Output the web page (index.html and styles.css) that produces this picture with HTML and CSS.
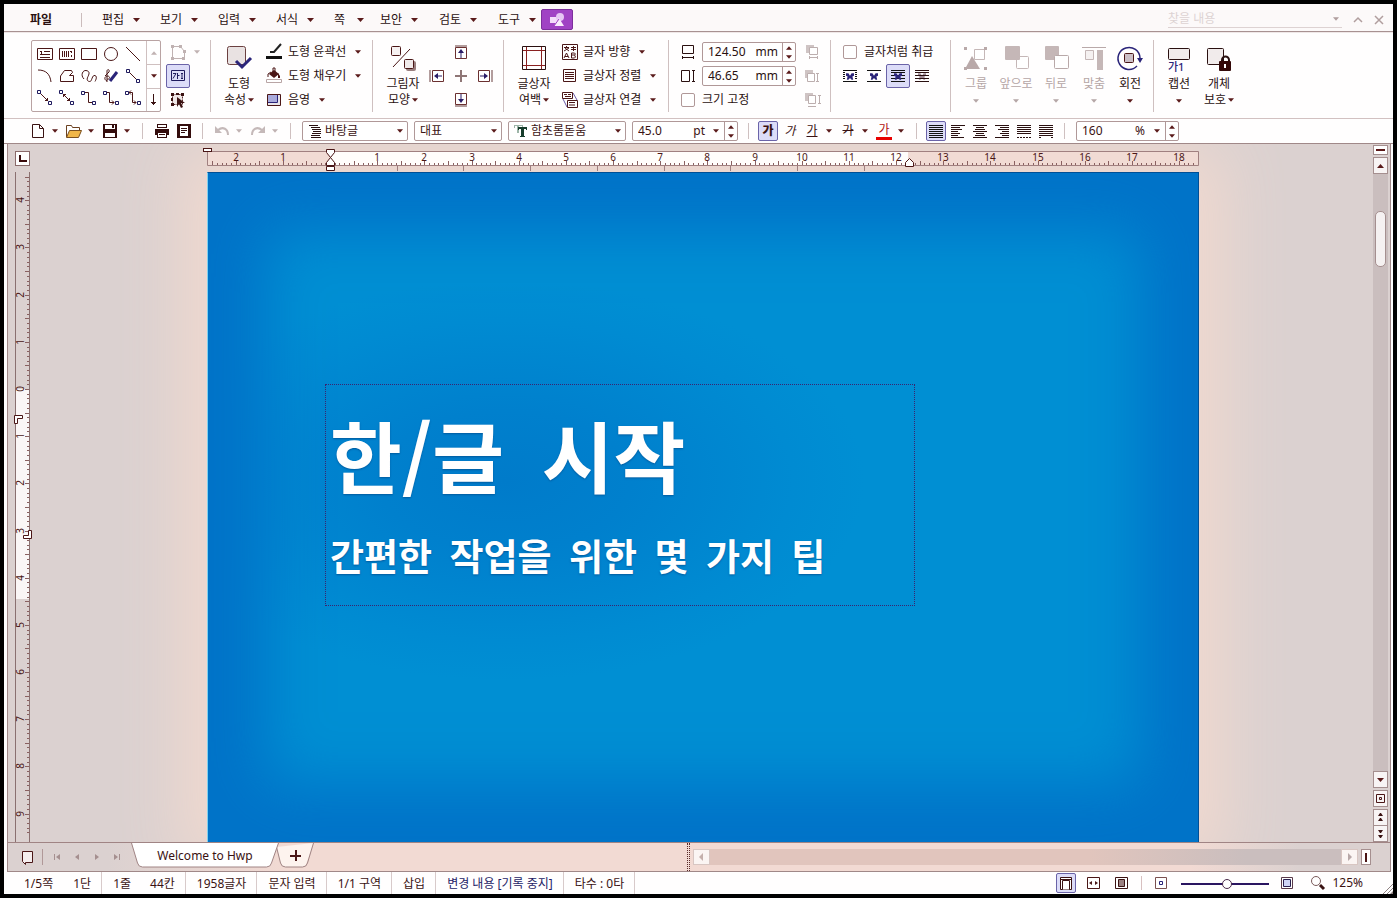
FILE: index.html
```html
<!DOCTYPE html>
<html lang="ko">
<head>
<meta charset="utf-8">
<title>Welcome to Hwp</title>
<link rel="stylesheet" href="styles.css">
</head>
<body>
<svg class="sprite" aria-hidden="true">
  <symbol id="caret" viewBox="0 0 7 4"><path d="M0 0h7L3.500 4z" fill="currentColor"/></symbol>
  <symbol id="up" viewBox="0 0 7 4"><path d="M0 4h7L3.500 0z" fill="currentColor"/></symbol>
  <symbol id="wing" viewBox="0 0 10 8"><path d="M0 0h3l2 3 2-3h3v3L8 4l1 4H7L5 6 3 8H1l1-4-2-1z" fill="currentColor"/></symbol>
  <symbol id="node" viewBox="0 0 4 4"><path d="M.5.5h3v3h-3z" fill="#fff" stroke="#1f1a5e"/></symbol>
</svg>
<div class="app">
  <header class="menubar">
    <nav class="menus">
      <button class="menu file">파일</button>
      <span class="menu-sep"></span>
      <button class="menu">편집<svg class="caret"><use href="#caret"/></svg></button>
      <button class="menu">보기<svg class="caret"><use href="#caret"/></svg></button>
      <button class="menu">입력<svg class="caret"><use href="#caret"/></svg></button>
      <button class="menu">서식<svg class="caret"><use href="#caret"/></svg></button>
      <button class="menu">쪽<svg class="caret"><use href="#caret"/></svg></button>
      <button class="menu">보안<svg class="caret"><use href="#caret"/></svg></button>
      <button class="menu">검토<svg class="caret"><use href="#caret"/></svg></button>
      <button class="menu">도구<svg class="caret"><use href="#caret"/></svg></button>
      <button class="shape-tab" aria-label="도형"><svg width="16" height="14" viewBox="0 0 16 14"><path d="M1 4h7v6H1z" fill="#f3dcfa"/><circle cx="11" cy="4" r="4" fill="#e6c6f4"/><path d="M10 5l5 8H5z" fill="#f9ecfd"/><path d="M5 13l5-7" stroke="#a043c4"/></svg></button>
    </nav>
    <div class="find">
      <label class="find-box"><input type="text" placeholder="찾을 내용" aria-label="찾을 내용"><svg class="small"><use href="#caret"/></svg></label>
      <button aria-label="접기"><svg width="10" height="10" viewBox="0 0 10 10" fill="none" stroke="currentColor" stroke-width="1.500"><path d="M1 7l4-4 4 4"/></svg></button>
      <button aria-label="닫기"><svg width="10" height="10" viewBox="0 0 10 10" fill="none" stroke="currentColor" stroke-width="1.500"><path d="M1 1l8 8M9 1L1 9"/></svg></button>
    </div>
  </header>

  <section class="ribbon">
    <div class="group g-draw">
      <div class="gallery">
        <div class="shapes">
          <button aria-label="가로 글상자"><svg width="16" height="16" viewBox="0 0 16 16" fill="none" stroke="#4a1616"><path d="M.5 2.500h15v11H.5zM3 5.500h1M7 5.500h6M3 8.500h10M3 11.500h10M4.500 5v3"/></svg></button>
          <button aria-label="세로 글상자"><svg width="16" height="16" viewBox="0 0 16 16" fill="none" stroke="#4a1616"><path d="M.5 2.500h15v11H.5zM3.500 5v6M5.500 5v6M7.500 5v6M9.500 5v6M12.500 5v2M12.500 9v2M11 5.500h2"/></svg></button>
          <button aria-label="직사각형"><svg width="16" height="16" viewBox="0 0 16 16" fill="none" stroke="#4a1616"><path d="M.5 2.500h15v11H.5z"/></svg></button>
          <button aria-label="타원"><svg width="16" height="16" viewBox="0 0 16 16" fill="none" stroke="#4a1616"><circle cx="8" cy="8" r="6.500"/></svg></button>
          <button aria-label="직선"><svg width="16" height="16" viewBox="0 0 16 16" fill="none" stroke="#4a1616"><path d="M1 1l14 14"/></svg></button>
          <button aria-label="호"><svg width="16" height="16" viewBox="0 0 16 16" fill="none" stroke="#4a1616"><path d="M1 2c8 0 12 4 13 12"/></svg></button>
          <button aria-label="다각형"><svg width="16" height="16" viewBox="0 0 16 16" fill="none" stroke="#4a1616"><path d="M1.500 13.500V8l4-5.500h7l1 2-3 3h4v6z"/></svg></button>
          <button aria-label="곡선"><svg width="16" height="16" viewBox="0 0 16 16" fill="none" stroke="#4a1616"><path d="M3 11C-1 7 2 2 5 2.500s4 2 2 6 0 5 2 5 2-7 5-6 0 6 0 6"/></svg></button>
          <button aria-label="자유선"><svg width="16" height="16" viewBox="0 0 16 16" fill="none" stroke="#4a1616"><path d="M4 13c-3-1-3-5 1-5 3 1 1 4-1 3M4 14V3c0-2 3-2 2 1L2 8"/><path d="M7 13l7-9" stroke="#2a2479" stroke-width="3"/></svg></button>
          <button aria-label="직선 연결선"><svg width="16" height="16" viewBox="0 0 16 16" fill="none" stroke="#4a1616"><path d="M3 3l10 10"/><use href="#node" x="1" y="1" width="4" height="4"/><use href="#node" x="11" y="11" width="4" height="4"/></svg></button>
          <button aria-label="화살표 연결선"><svg width="16" height="16" viewBox="0 0 16 16" fill="none" stroke="#4a1616"><path d="M3 3l8 8M10.500 8v2.500H8"/><use href="#node" x="0" y="0" width="4" height="4"/><use href="#node" x="11" y="11" width="4" height="4"/></svg></button>
          <button aria-label="양쪽 화살표 연결선"><svg width="16" height="16" viewBox="0 0 16 16" fill="none" stroke="#4a1616"><path d="M4 4l7 7M10.500 8v2.500H8M4.500 7V4.500H7"/><use href="#node" x="0" y="0" width="4" height="4"/><use href="#node" x="11" y="11" width="4" height="4"/></svg></button>
          <button aria-label="꺾인 연결선"><svg width="16" height="16" viewBox="0 0 16 16" fill="none" stroke="#4a1616"><path d="M3 2.500h4.500v10H12"/><use href="#node" x="0" y="1" width="4" height="4"/><use href="#node" x="11" y="11" width="4" height="4"/></svg></button>
          <button aria-label="꺾인 화살표 연결선"><svg width="16" height="16" viewBox="0 0 16 16" fill="none" stroke="#4a1616"><path d="M3 2.500h3.500v10H11M9 10.500l2 2-2 2"/><use href="#node" x="0" y="1" width="4" height="4"/><use href="#node" x="12" y="11" width="4" height="4"/></svg></button>
          <button aria-label="꺾인 양쪽 화살표 연결선"><svg width="16" height="16" viewBox="0 0 16 16" fill="none" stroke="#4a1616"><path d="M4 2.500h3.500v10H11M9 10.500l2 2-2 2M6 .500l-2 2 2 2"/><use href="#node" x="0" y="1" width="4" height="4"/><use href="#node" x="12" y="11" width="4" height="4"/></svg></button>
        </div>
        <div class="gallery-scroll">
          <button class="dim" aria-label="위로"><svg class="small"><use href="#up"/></svg></button>
          <button aria-label="아래로"><svg class="small"><use href="#caret"/></svg></button>
          <button aria-label="더 보기"><svg width="7" height="12" viewBox="0 0 7 12"><path d="M3 0h1v8h2v1H5v1H4v1H3v-1H2V9H1V8h2z" fill="#3a1212"/></svg></button>
        </div>
      </div>
      <div class="tools">
        <div class="tool-row dim"><button class="tool" disabled aria-label="다각형 편집"><svg width="16" height="16" viewBox="0 0 16 16" fill="none" stroke="#c0b2b2"><path d="M2.500 2.500h8l4 5v7h-12z"/><path d="M1 1h3v3H1zM9 1h3v3H9zM13 6h3v3h-3zM1 13h3v3H1zM12 13h3v3h-3z" fill="#c0b2b2" stroke="none"/></svg></button><svg class="small"><use href="#caret"/></svg></div>
        <button class="tool on" aria-label="글상자"><svg width="16" height="14" viewBox="0 0 16 14" fill="none" stroke="#1f1a5e"><path d="M1.500 1.500h13v10h-13zM3 4.500h3l-3 5M7.500 4v6M7.500 6.500h2M11 4.500h2M12 4.500v5M11 9.500h2"/></svg></button>
        <button class="tool" aria-label="개체 선택"><svg width="16" height="16" viewBox="0 0 16 16"><path d="M2.500 2.500h10v10h-10z" fill="#eee6e6" stroke="#5a2a2a" stroke-dasharray="2 1"/><path d="M1 1h3v3H1zM6 1h3v2H6zM11 1h3v3h-3zM1 6h2v3H1zM1 11h3v3H1z" fill="#3a1212"/><path d="M7 5l8 6h-4l2 4-2 1-2-4-2 3z" fill="#3a1212"/></svg></button>
      </div>
    </div>

    <div class="group g-shape">
      <button class="tall"><span class="pic"><svg width="28" height="28" viewBox="0 0 28 28"><rect x="2.500" y="2.500" width="18" height="18" rx="2" fill="#e9e2e2" stroke="#6b4040"/><path d="M11 17l6 6 9-9" fill="none" stroke="#2a2479" stroke-width="3"/></svg></span><span>도형</span><span class="line">속성<svg class="tiny"><use href="#caret"/></svg></span></button>
      <div class="stack">
        <button class="row"><svg width="18" height="16" viewBox="0 0 18 16"><path d="M1 12h16v3H1z" fill="#111"/><path d="M5 8h4l7-8" fill="none" stroke="#222" stroke-width="2"/></svg>도형 윤곽선<svg class="small"><use href="#caret"/></svg></button>
        <button class="row"><svg width="18" height="16" viewBox="0 0 18 16"><path d="M1.500 11.500h15v3h-15z" fill="#fff" stroke="#b9a5a5"/><path d="M4 6l5-4 5 4-5 4z" fill="#4a1616"/><path d="M8 4V0h2v5M3 9V6l3-2" fill="none" stroke="#4a1616"/><path d="M13 5l2 3v2h-2z" fill="#4a1616"/></svg>도형 채우기<svg class="small"><use href="#caret"/></svg></button>
        <button class="row"><svg width="18" height="16" viewBox="0 0 18 16"><path d="M2.500 2.500h13v11h-13z" fill="#e9e6ea" stroke="#4a1616"/><path d="M3 3h9v7H3z" fill="#a9abdc"/><path d="M3 10.500h9.500V3" fill="none" stroke="#2a2479"/></svg>음영<svg class="small"><use href="#caret"/></svg></button>
      </div>
    </div>

    <div class="group g-shadow">
      <button class="tall"><span class="pic"><svg width="28" height="28" viewBox="0 0 28 28" fill="none" stroke="#4a1616"><rect x="2.500" y="2.500" width="9" height="9" rx="1" fill="#f6f1f1"/><path d="M21 5L4 23"/><rect x="17" y="17" width="10" height="10" rx="2" fill="#9a8080" stroke="none"/><rect x="15.500" y="15.500" width="9" height="9" rx="1" fill="#f0eaea"/></svg></span><span>그림자</span><span class="line">모양<svg class="tiny"><use href="#caret"/></svg></span></button>
      <div class="nudge">
        <button class="n-up" aria-label="위로"><svg width="16" height="16" viewBox="0 0 16 16"><path d="M2 1h12v2H2z" fill="#b39d9d"/><path d="M2.500 3.500h11v11h-11z" fill="#fff" stroke="#6b3030"/><path d="M8 5l3 4H8.500v5h-1V9H5z" fill="#2a1c66"/></svg></button>
        <button class="n-left" aria-label="왼쪽으로"><svg width="16" height="16" viewBox="0 0 16 16"><path d="M0 2h2v12H0z" fill="#b39d9d"/><path d="M3.500 2.500h11v11h-11z" fill="#fff" stroke="#6b3030"/><path d="M5 8l4-3v2.500h4v1H9V11z" fill="#2a1c66"/></svg></button>
        <button class="n-mid" aria-label="제자리"><svg width="16" height="16" viewBox="0 0 16 16"><path d="M7 2h2v5h5v2H9v5H7V9H2V7h5z" fill="#8f7676"/></svg></button>
        <button class="n-right" aria-label="오른쪽으로"><svg width="16" height="16" viewBox="0 0 16 16"><path d="M14 2h2v12h-2z" fill="#b39d9d"/><path d="M1.500 2.500h11v11h-11z" fill="#fff" stroke="#6b3030"/><path d="M11 8L7 5v2.500H3v1h4V11z" fill="#2a1c66"/></svg></button>
        <button class="n-down" aria-label="아래로"><svg width="16" height="16" viewBox="0 0 16 16"><path d="M2 13h12v2H2z" fill="#b39d9d"/><path d="M2.500 1.500h11v11h-11z" fill="#fff" stroke="#6b3030"/><path d="M8 11l3-4H8.500V2h-1v5H5z" fill="#2a1c66"/></svg></button>
      </div>
    </div>

    <div class="group g-textbox">
      <button class="tall"><span class="pic"><svg width="28" height="28" viewBox="0 0 28 28" fill="none"><path d="M2.500 2.500h23v23h-23z" stroke="#2a1010"/><path d="M6.500 3v22M21.500 3v22M3 6.500h22M3 21.500h22" stroke="#8a2020"/></svg></span><span>글상자</span><span class="line">여백<svg class="tiny"><use href="#caret"/></svg></span></button>
      <div class="stack">
        <button class="row"><svg width="16" height="16" viewBox="0 0 16 16" fill="none" stroke="#4a1616"><path d="M.5.500h15v15H.5zM2 3.500h5M4.500 2v2M2 7l5-3M3 4l4 3M9 3.500h5M11.500 2v5M9 5.500h5M2 14l2.500-5L7 14M3 12.500h3M9.500 9v5h3l1-1-1-2h-3M9.500 9h3l1 1-1 1"/></svg>글자 방향<svg class="small"><use href="#caret"/></svg></button>
        <button class="row"><svg width="16" height="16" viewBox="0 0 16 16" fill="none" stroke="#4a1616"><path d="M1.500 1.500h12v12h-12zM3 4.500h9M3 6.500h9M3 8.500h9M3 10.500h9"/></svg>글상자 정렬<svg class="small"><use href="#caret"/></svg></button>
        <button class="row"><svg width="16" height="16" viewBox="0 0 16 16" fill="none" stroke="#4a1616"><path d="M1 7l4 8M11 1l4 7" stroke="#6a5aa8"/><path d="M.5.500h10v6H.5zM2 2.500h3M6 2.500h3M3 4.500h6"/><path d="M5.500 8.500h10v7h-10zM7 10.500h6M7 13h6" fill="#fff"/></svg>글상자 연결<svg class="small"><use href="#caret"/></svg></button>
      </div>
    </div>

    <div class="group g-size">
      <div class="stack">
        <div class="size-row"><svg width="14" height="16" viewBox="0 0 14 16" fill="none" stroke="#2a1010"><path d="M1.500 1.500h11v8h-11zM1 13.500h12M1.500 12v3M12.500 12v3"/></svg>
          <div class="number"><input type="text" value="124.50" aria-label="너비"><span class="unit">mm</span><span class="spin"><button aria-label="늘리기"><svg class="small"><use href="#up"/></svg></button><button aria-label="줄이기"><svg class="small"><use href="#caret"/></svg></button></span></div>
          <button class="link" disabled aria-label="너비를 같게"><svg width="14" height="16" viewBox="0 0 14 16"><path d="M1 1h8v8H1z" fill="#cfc4c4"/><path d="M4.500 3.500h8v7h-8z" fill="#fff" stroke="#bcaeae"/><path d="M4 13.500h9M4.500 12v3M12.500 12v3" stroke="#bcaeae"/></svg></button></div>
        <div class="size-row"><svg width="14" height="16" viewBox="0 0 14 16" fill="none" stroke="#2a1010"><path d="M.5 2.500h8v11h-8zM12.500 2v12M11 2.500h3M11 13.500h3"/></svg>
          <div class="number"><input type="text" value="46.65" aria-label="높이"><span class="unit">mm</span><span class="spin"><button aria-label="늘리기"><svg class="small"><use href="#up"/></svg></button><button aria-label="줄이기"><svg class="small"><use href="#caret"/></svg></button></span></div>
          <button class="link" disabled aria-label="높이를 같게"><svg width="14" height="16" viewBox="0 0 14 16"><path d="M0 2h8v8H0z" fill="#cfc4c4"/><path d="M2.500 5.500h7v8h-7z" fill="#fff" stroke="#bcaeae"/><path d="M12.500 5v9M11 5.500h3M11 13.500h3" stroke="#bcaeae"/></svg></button></div>
        <div class="size-row"><label class="check fixed"><input type="checkbox">크기 고정</label>
          <button class="link" disabled aria-label="크기를 같게"><svg width="16" height="16" viewBox="0 0 16 16"><path d="M0 1h8v8H0z" fill="#cfc4c4"/><path d="M3.500 3.500h7v8h-7z" fill="#fff" stroke="#bcaeae"/><path d="M3 14.500h8M14.500 3v9M13 3.500h3M13 11.500h3" stroke="#bcaeae"/></svg></button></div>
      </div>
    </div>

    <div class="group g-wrap">
      <div class="stack">
        <label class="check inset"><input type="checkbox">글자처럼 취급</label>
        <div class="wraps">
          <button class="tool" aria-label="어울림"><svg width="14" height="14" viewBox="0 0 14 14"><path d="M0 1.500h14M0 3.500h2M12 3.500h2M0 5.500h2M12 5.500h2M0 7.500h2M12 7.500h2M0 9.500h2M12 9.500h2M0 12.500h14" stroke="#111"/><use href="#wing" x="3" y="4" width="8" height="7" color="#2a2479"/></svg></button>
          <button class="tool" aria-label="자리 차지"><svg width="14" height="14" viewBox="0 0 14 14"><path d="M0 1.500h14M0 12.500h14" stroke="#111"/><use href="#wing" x="3" y="4" width="8" height="7" color="#2a2479"/></svg></button>
          <button class="tool on" aria-label="글 앞으로"><svg width="14" height="14" viewBox="0 0 14 14"><path d="M0 1.500h14M0 3.500h14M0 6.500h14M0 9.500h14M0 12.500h14" stroke="#111"/><use href="#wing" x="3" y="4" width="8" height="7" color="#2a2479"/></svg></button>
          <button class="tool" aria-label="글 뒤로"><svg width="14" height="14" viewBox="0 0 14 14"><use href="#wing" x="3" y="4" width="8" height="7" color="#a08c98"/><path d="M0 1.500h14M0 3.500h14M0 6.500h14M0 9.500h14M0 12.500h14" stroke="#2a1010"/></svg></button>
        </div>
      </div>
    </div>

    <div class="group g-arrange">
      <button class="tall" disabled><span class="pic"><svg width="28" height="28" viewBox="0 0 28 28"><path d="M12.500 5.500h10v10h-10z" fill="#fff" stroke="#c5b7b7"/><path d="M10 12l8 13H3z" fill="#b9a9a9"/><path d="M2 3h3v3H2zM22 3h3v3h-3zM22 23h3v3h-3zM2 23h3v3H2z" fill="#b9a9a9"/></svg></span><span>그룹</span><svg class="tiny below"><use href="#caret"/></svg></button>
      <button class="tall" disabled><span class="pic"><svg width="28" height="28" viewBox="0 0 28 28"><rect x="14.500" y="12.500" width="12" height="12" rx="1" fill="#fff" stroke="#c5b7b7"/><rect x="3" y="2" width="15" height="14" rx="1" fill="#c5b7b7"/></svg></span><span>앞으로</span><svg class="tiny below"><use href="#caret"/></svg></button>
      <button class="tall" disabled><span class="pic"><svg width="28" height="28" viewBox="0 0 28 28"><rect x="3" y="2" width="14" height="14" rx="1" fill="#c5b7b7"/><rect x="12.500" y="11.500" width="14" height="13" rx="1" fill="#fff" stroke="#b9a9a9"/></svg></span><span>뒤로</span><svg class="tiny below"><use href="#caret"/></svg></button>
      <button class="tall slim" disabled><span class="pic"><svg width="28" height="28" viewBox="0 0 28 28"><path d="M2 3.500h24" stroke="#b9a9a9"/><path d="M5.500 6.500h8v9h-8z" fill="#f5f1f1" stroke="#c5b7b7"/><path d="M17 6h6v20h-6z" fill="#c5b7b7"/></svg></span><span>맞춤</span><svg class="tiny below"><use href="#caret"/></svg></button>
      <button class="tall slim"><span class="pic"><svg width="28" height="28" viewBox="0 0 28 28" fill="none"><path d="M21 22a11 11 0 1 1 3-8" stroke="#2a2479" stroke-width="1.500"/><path d="M21 14h6l-3 5z" fill="#2a2479"/><rect x="8.500" y="9.500" width="9" height="9" rx="1" fill="#cbbfc6" stroke="#4a1616"/></svg></span><span>회전</span><svg class="tiny below"><use href="#caret"/></svg></button>
    </div>

    <div class="group g-object">
      <button class="tall"><span class="pic"><svg width="28" height="28" viewBox="0 0 28 28"><rect x="3.500" y="4.500" width="21" height="11" rx="1" fill="#f1ebeb" stroke="#2a1010"/><text x="3" y="27" class="caption-mark">가1</text></svg></span><span>캡션</span><svg class="tiny below"><use href="#caret"/></svg></button>
      <button class="tall"><span class="pic"><svg width="28" height="28" viewBox="0 0 28 28"><rect x="2.500" y="4.500" width="16" height="16" rx="1" fill="#f1ebeb" stroke="#2a1010"/><path d="M17 18v-2a3.500 3.500 0 0 1 7 0v2" fill="none" stroke="#2a1010" stroke-width="2"/><rect x="14" y="17" width="12" height="10" rx="1" fill="#330808"/><path d="M20 20v4" stroke="#fff" stroke-width="2"/></svg></span><span>개체</span><span class="line">보호<svg class="tiny"><use href="#caret"/></svg></span></button>
    </div>
  </section>

  <section class="toolbar">
    <span class="split"><button aria-label="새 문서"><svg width="16" height="16" viewBox="0 0 16 16" fill="#fff" stroke="#3a1212"><path d="M2.500 1.500h7l4 4v9h-11zM9.500 1.500v4h4"/></svg></button><svg class="small"><use href="#caret"/></svg></span>
    <span class="split"><button aria-label="열기"><svg width="16" height="16" viewBox="0 0 16 16"><path d="M.5 14V2.500h5l1 2h7V7" fill="#fff" stroke="#6b4020"/><path d="M3.500 7.500h12l-3 7H.5z" fill="#f0b648" stroke="#7a5020"/></svg></button><svg class="small"><use href="#caret"/></svg></span>
    <span class="split"><button aria-label="저장"><svg width="16" height="16" viewBox="0 0 16 16"><path d="M1 1h14v14H1z" fill="#330c0c"/><path d="M3 2h10v4H3zM3 10h10v4H3z" fill="#fff"/><path d="M10 2h2v3h-2z" fill="#330c0c"/></svg></button><svg class="small"><use href="#caret"/></svg></span>
    <span class="bar"></span>
    <button class="ic" aria-label="인쇄"><svg width="16" height="16" viewBox="0 0 16 16"><path d="M3 1h10v4H3zM1 6h14v6H1zM3 10h10v5H3z" fill="#330c0c"/><path d="M4 2h8v2H4zM4 10h8v4H4z" fill="#fff"/><path d="M5 11.500h6" stroke="#330c0c"/></svg></button>
    <button class="ic" aria-label="미리 보기"><svg width="16" height="16" viewBox="0 0 16 16"><path d="M1 1h14v14H1z" fill="#330c0c"/><path d="M4 3h8v10H4z" fill="#fff"/><path d="M5 5.500h6M5 7.500h6M5 9.500h4" stroke="#330c0c"/></svg></button>
    <span class="bar"></span>
    <span class="split dim"><button disabled aria-label="되돌리기"><svg width="16" height="16" viewBox="0 0 16 16" fill="none"><path d="M4 7c5-4 10-1 10 5" stroke="#c5b9b9" stroke-width="2"/><path d="M1 3v7h7z" fill="#c5b9b9"/></svg></button><svg class="small"><use href="#caret"/></svg></span>
    <span class="split dim"><button disabled aria-label="다시 실행"><svg width="16" height="16" viewBox="0 0 16 16" fill="none"><path d="M12 7C7 3 2 6 2 12" stroke="#c5b9b9" stroke-width="2"/><path d="M15 3v7H8z" fill="#c5b9b9"/></svg></button><svg class="small"><use href="#caret"/></svg></span>
    <span class="bar"></span>
    <span class="field f-style"><svg width="14" height="14" viewBox="0 0 14 14"><path d="M1 1.500h9M3 3.500h9M4 5.500h9M5 7.500h8M4 9.500h9M3 11.500h9M3 13.500h10" stroke="#2a1010"/></svg><select aria-label="스타일"><option>바탕글</option></select><svg class="small"><use href="#caret"/></svg></span>
    <span class="field f-rep"><select aria-label="언어"><option>대표</option></select><svg class="small"><use href="#caret"/></svg></span>
    <span class="field f-font"><svg width="14" height="14" viewBox="0 0 14 14"><path d="M0 1h9v3H8V2H5v7H3V2H1v2H0z" fill="#9db5a8"/><path d="M4 3h9v3h-1V5h-2v7h1v1H6v-1h1V5H5v1H4z" fill="#173d2c"/></svg><select aria-label="글꼴"><option>함초롬돋움</option></select><svg class="small"><use href="#caret"/></svg></span>
    <div class="number combo"><input type="text" value="45.0" aria-label="글자 크기"><span class="unit">pt</span><svg class="small"><use href="#caret"/></svg><span class="spin"><button aria-label="크게"><svg class="small"><use href="#up"/></svg></button><button aria-label="작게"><svg class="small"><use href="#caret"/></svg></button></span></div>
    <span class="bar"></span>
    <button class="ic on" aria-label="진하게"><b>가</b></button>
    <button class="ic" aria-label="기울임"><i>가</i></button>
    <span class="split"><button aria-label="밑줄"><u>가</u></button><svg class="small"><use href="#caret"/></svg></span>
    <span class="split"><button aria-label="취소선"><s>가</s></button><svg class="small"><use href="#caret"/></svg></span>
    <span class="split"><button class="ink" aria-label="글자 색">가</button><svg class="small"><use href="#caret"/></svg></span>
    <span class="bar"></span>
    <button class="ic on" aria-label="양쪽 정렬"><svg width="14" height="14" viewBox="0 0 14 14"><path d="M0 1.500h14M0 3.500h14M0 5.500h14M0 7.500h14M0 9.500h14M0 11.500h14M0 13.500h14" stroke="#111"/></svg></button>
    <button class="ic" aria-label="왼쪽 정렬"><svg width="14" height="14" viewBox="0 0 14 14"><path d="M0 1.500h14M0 3.500h9M0 5.500h11M0 7.500h7M0 9.500h9M0 11.500h7M0 13.500h13" stroke="#2a1010"/></svg></button>
    <button class="ic" aria-label="가운데 정렬"><svg width="14" height="14" viewBox="0 0 14 14"><path d="M0 1.500h14M3 3.500h8M2 5.500h10M0 7.500h14M3 9.500h8M2 11.500h10M0 13.500h14" stroke="#2a1010"/></svg></button>
    <button class="ic" aria-label="오른쪽 정렬"><svg width="14" height="14" viewBox="0 0 14 14"><path d="M0 1.500h14M5 3.500h9M3 5.500h11M7 7.500h7M5 9.500h9M7 11.500h7M0 13.500h14" stroke="#2a1010"/></svg></button>
    <button class="ic" aria-label="배분 정렬"><svg width="14" height="14" viewBox="0 0 14 14"><path d="M0 1.500h14M0 3.500h14M0 5.500h14M0 7.500h14M0 9.500h14M0 13.500h2M3 13.500h2M6 13.500h2M9 13.500h2M12 13.500h2" stroke="#2a1010"/></svg></button>
    <button class="ic" aria-label="나눔 정렬"><svg width="14" height="14" viewBox="0 0 14 14"><path d="M0 1.500h14M0 3.500h14M0 5.500h14M0 7.500h14M0 9.500h14M0 11.500h14M0 13.500h2M12 13.500h2" stroke="#2a1010"/></svg></button>
    <span class="bar"></span>
    <div class="number combo spacing"><input type="text" value="160" aria-label="줄 간격"><span class="unit">%</span><svg class="small"><use href="#caret"/></svg><span class="spin"><button aria-label="늘리기"><svg class="small"><use href="#up"/></svg></button><button aria-label="줄이기"><svg class="small"><use href="#caret"/></svg></button></span></div>
  </section>

  <div class="frame">
    <main class="workspace">
      <div class="side">
        <button class="tab-kind" aria-label="탭 종류"><svg width="8" height="7" viewBox="0 0 8 7"><path d="M0 0h2v5h6v2H0z" fill="#3a0c0c"/></svg></button>
        <svg class="vruler" id="vruler"></svg>
      </div>
      <div class="canvas">
        <svg class="hruler" id="hruler"></svg>
        <article class="paper">
          <div class="textbox">
            <h1><span class="word">한/글</span> 시작</h1>
            <p><span class="word">간편한</span> <span class="word">작업을</span> <span class="word">위한</span> <span class="word">몇</span> <span class="word">가지</span> 팁</p>
          </div>
        </article>
      </div>
      <div class="vscroll">
        <button class="short" aria-label="나누기"><svg width="9" height="2" viewBox="0 0 9 2"><path d="M0 0h9v2H0z" fill="#5a1616"/></svg></button>
        <button aria-label="위로"><svg class="caret"><use href="#up"/></svg></button>
        <div class="track"><div class="thumb"></div></div>
        <button aria-label="아래로"><svg class="caret"><use href="#caret"/></svg></button>
        <button class="apart" aria-label="개체 찾기"><svg width="11" height="11" viewBox="0 0 11 11" fill="none" stroke="#4a1616"><path d="M1.500 1.500h8v8h-8zM4.500 4.500h2v2h-2z"/></svg></button>
        <button aria-label="이전 쪽"><svg width="7" height="9" viewBox="0 0 7 9"><path d="M3 0h1l2 3H1zM3 5h1l2 3H1z" fill="#3a1212"/></svg></button>
        <button class="joined" aria-label="다음 쪽"><svg width="7" height="9" viewBox="0 0 7 9"><path d="M1 1h5L4 4H3zM1 6h5L4 9H3z" fill="#3a1212"/></svg></button>
      </div>
    </main>
    <div class="tabbar">
      <div class="tabs">
        <button class="list" aria-label="문서 목록"><svg width="14" height="14" viewBox="0 0 14 14"><path d="M2.500 1.500h10v11h-7v2l-3-3z" fill="#f5eeee" stroke="#4a1616"/></svg></button>
        <span class="tab-sep"></span>
        <button aria-label="처음"><svg width="8" height="8" viewBox="0 0 8 8"><path d="M1 1h1v6H1zM7 1v6L3 4z" fill="#a58f8f"/></svg></button>
        <button aria-label="이전"><svg width="8" height="8" viewBox="0 0 8 8"><path d="M6 1v6L2 4z" fill="#a58f8f"/></svg></button>
        <button aria-label="다음"><svg width="8" height="8" viewBox="0 0 8 8"><path d="M2 1v6l4-3z" fill="#a58f8f"/></svg></button>
        <button aria-label="마지막"><svg width="8" height="8" viewBox="0 0 8 8"><path d="M6 1h1v6H6zM1 1v6l4-3z" fill="#a58f8f"/></svg></button>
        <button class="doc"><svg class="tabshape" viewBox="0 0 148 25" preserveAspectRatio="none"><path d="M.5 0l6 20q1 4 5 4h124q4 0 5-4l7-20z" fill="#fff"/><path d="M.5 0l6 20q1 4 5 4h124q4 0 5-4l7-20" fill="none" stroke="#a08484"/></svg><span>Welcome to Hwp</span></button>
        <button class="add" aria-label="새 탭"><svg class="tabshape" viewBox="0 0 38 25" preserveAspectRatio="none"><path d="M.5 4l4 16q1 4 5 4h16q4 0 5-4l7-20z" fill="#fdf3ee"/><path d="M.5 4l4 16q1 4 5 4h17q4 0 5-4l6-20" fill="none" stroke="#a08484"/></svg><svg class="plus" width="11" height="11" viewBox="0 0 11 11"><path d="M5 0h2v5h4v2H7v4H5V7H0V5h5z" fill="#4a1616"/></svg></button>
      </div>
      <div class="grip"></div>
      <div class="hscroll">
        <button class="faint" aria-label="왼쪽으로"><svg width="8" height="8" viewBox="0 0 8 8"><path d="M6 0v8L2 4z" fill="#c5b0ac"/></svg></button>
        <div class="htrack"></div>
        <button class="faint" aria-label="오른쪽으로"><svg width="8" height="8" viewBox="0 0 8 8"><path d="M2 0v8l4-4z" fill="#b8a8a8"/></svg></button>
        <button class="narrow" aria-label="나누기"><svg width="2" height="9" viewBox="0 0 2 9"><path d="M0 0h2v9H0z" fill="#4a1616"/></svg></button>
      </div>
    </div>
  </div>

  <footer class="status">
    <div class="cells">
      <span class="cell"><span>1/5쪽</span><span>1단</span></span>
      <span class="cell mid"><span>1줄</span><span>44칸</span></span>
      <span class="cell">1958글자</span>
      <span class="cell">문자 입력</span>
      <span class="cell">1/1 구역</span>
      <span class="cell">삽입</span>
      <span class="cell navy">변경 내용 [기록 중지]</span>
      <span class="cell">타수 : 0타</span>
    </div>
    <div class="views">
      <button class="view on" aria-label="쪽 윤곽"><svg width="14" height="14" viewBox="0 0 14 14" fill="#fff" stroke="#3a1212"><path d="M1.500 13.500v-12h11v12z"/><path d="M3.500 13.500v-9h7v9M1 3.500h12"/></svg></button>
      <button class="view" aria-label="폭 맞춤"><svg width="14" height="14" viewBox="0 0 14 14"><path d="M.5 1.500h12v11H.5z" fill="#fff" stroke="#4a1616"/><path d="M5 5v4L2 7zM8 5v4l3-2z" fill="#4a1616"/></svg></button>
      <button class="view" aria-label="쪽 맞춤"><svg width="14" height="14" viewBox="0 0 14 14"><path d="M.5 1.500h12v11H.5z" fill="#fff" stroke="#3a1212"/><path d="M3.500 3.500h6v7h-6z" fill="#9a8080" stroke="#3a1212"/></svg></button>
      <span class="view-sep"></span>
      <button class="view" aria-label="축소"><svg width="14" height="14" viewBox="0 0 14 14"><path d="M1.500 1.500h11v11h-11z" fill="#fff" stroke="#7a5050"/><path d="M5.500 5.500h3v3h-3z" fill="#fff" stroke="#2a2479"/></svg></button>
      <input class="zoom" type="range" min="0" max="100" value="52" aria-label="확대 비율">
      <button class="view" aria-label="확대"><svg width="14" height="14" viewBox="0 0 14 14"><path d="M1.500 1.500h11v11h-11z" fill="#fff" stroke="#5a3a4a"/><path d="M3.500 3.500h7v7h-7z" fill="#cfd4f5" stroke="#2a2050"/></svg></button>
      <button class="percent"><svg width="16" height="16" viewBox="0 0 16 16" fill="none"><circle cx="6" cy="6" r="4.500" stroke="#7a5a5a"/><path d="M10 10l4 4" stroke="#3a1212" stroke-width="3"/></svg>125%</button>
      <svg class="resize" width="10" height="12" viewBox="0 0 10 12"><path d="M0 12L10 2M4 12l6-6" stroke="#8f8282"/><path d="M7 12l3-3v3z" fill="#8f8282"/></svg>
    </div>
  </footer>
</div>
<script src="rulers.js"></script>
</body>
</html>
```
FILE: styles.css
```css
* { box-sizing: border-box; }
body {
  margin: 0;
  font: 12px/16px "Noto Sans", "Noto Sans CJK KR", sans-serif;
  color: #3a1212;
}
button, input, select {
  font: inherit;
  color: inherit;
  background: none;
  border: 0;
  margin: 0;
  padding: 0;
}
svg { display: block; flex: none; overflow: visible; }
.sprite { position: absolute; width: 0; height: 0; }
.caret, .small, .tiny { width: 7px; height: 4px; color: #5a1a1a; }
.small, .tiny { width: 6px; }
.app {
  min-height: 100vh;
  display: flex;
  flex-direction: column;
  border: 4px solid #000;
  background: #fffefe;
}

/* menu bar */
.menubar {
  display: flex;
  justify-content: space-between;
  align-items: center;
  height: 28px;
  padding: 0 9px 0 26px;
  border-bottom: 1px solid #a89292;
  background: #fcf9f9;
}
.menus, .menu, .find, .find-box { display: flex; align-items: center; }
.menu { gap: 9px; width: 58px; height: 26px; padding-top: 4px; color: #2a1010; }
.menu:nth-of-type(6) { width: 46px; }
.menu:nth-of-type(6) { gap: 12px; }
.menu:nth-of-type(7), .menu:nth-of-type(8) { width: 59px; }
.menu:nth-of-type(9) { width: 43px; }
.file { width: 51px; font-weight: 700; }
.menu-sep { width: 1px; height: 14px; margin: 4px 20px 0 0; background: #cbbcbc; }
.shape-tab {
  display: grid;
  place-items: center;
  width: 32px;
  height: 21px;
  margin-top: 4px;
  border: 1px solid #7d2f9c;
  border-radius: 2px;
  background: #a043c4;
}
.find { gap: 11px; color: #b09e9e; padding-top: 4px; }
.find-box { width: 174px; border-bottom: 1px solid #ddd2d2; padding-right: 3px; }
.find-box input { flex: 1; min-width: 0; height: 16px; outline: 0; }
.find-box input::placeholder { color: #ddd3d3; opacity: 1; }
.find-box .small { color: #b09e9e; }

/* ribbon */
.ribbon {
  display: flex;
  padding: 7px 0 6px 27px;
  border-top: 1px solid #f0e8e8;
  border-bottom: 1px solid #d2c1c1;
}
.group { display: flex; align-items: flex-start; flex: none; height: 72px; border-right: 1px solid #cfc0c0; color: #2a1010; }
.g-draw { width: 180px; gap: 5px; }
.g-shape { width: 162px; padding-left: 8px; gap: 6px; }
.g-shadow { width: 131px; padding-left: 10px; gap: 2px; }
.g-textbox { width: 165px; padding-left: 10px; gap: 8px; }
.g-size { width: 162px; padding-left: 12px; }
.g-wrap { width: 120px; padding-left: 7px; }
.g-arrange { width: 203px; padding-left: 5px; }
.g-object { padding-left: 5px; border-right: 0; }
.gallery { display: flex; height: 72px; border: 1px solid #b9a3a3; border-radius: 2px; background: #fff; }
.shapes { display: grid; grid-template-columns: repeat(5, 22px); grid-auto-rows: 22px; padding: 2px 2px 2px 2px; }
.shapes button { display: grid; place-items: center; }
.gallery-scroll { display: grid; grid-template-rows: repeat(3, 1fr); width: 14px; border-left: 1px solid #cfc0c0; }
.gallery-scroll button { display: grid; place-items: center; }
.gallery-scroll button + button { border-top: 1px solid #cfc0c0; }
.tools { display: flex; flex-direction: column; }
.tool-row { display: flex; align-items: center; gap: 4px; }
.dim, .dim .small { color: #c0b2b2; }
.tool { display: grid; place-items: center; width: 24px; height: 24px; }
.on { border: 1px solid #6a63a8; border-radius: 2px; background: #dcdcf8; }
.tall { display: flex; flex-direction: column; align-items: center; flex: none; width: 40px; white-space: nowrap; }
.tall:disabled, .tall:disabled .tiny { color: #b5a6a6; }
.slim { width: 36px; }
.pic { display: grid; place-items: center; height: 36px; }
.line { display: flex; align-items: center; gap: 2px; }
.below { margin-top: 7px; }
.caption-mark { font-size: 11px; font-weight: 500; fill: #2a2479; }
.stack { display: flex; flex-direction: column; }
.row { display: flex; align-items: center; gap: 5px; height: 24px; white-space: nowrap; }
.row .small { margin-left: 4px; }
.nudge { display: grid; grid-template-columns: repeat(3, 24px); grid-auto-rows: 24px; }
.nudge button { display: grid; place-items: center; }
.n-up, .n-mid, .n-down { grid-column: 2; }
.n-up { grid-row: 1; }
.n-left, .n-mid, .n-right { grid-row: 2; }
.n-left { grid-column: 1; }
.n-right { grid-column: 3; }
.n-down { grid-row: 3; }
.size-row { display: flex; align-items: center; height: 24px; gap: 7px; }
.link { margin-left: 2px; }
.number {
  display: flex;
  align-items: center;
  width: 94px;
  height: 20px;
  padding-left: 5px;
  border: 1px solid #b09898;
  border-radius: 2px;
  background: #fff;
}
.number input { flex: 1; min-width: 0; width: 20px; height: 16px; outline: 0; }
.unit { padding-right: 4px; }
.spin { display: grid; grid-template-rows: 1fr 1fr; width: 13px; height: 18px; border-left: 1px solid #b09898; }
.spin button { display: grid; place-items: center; }
.check { display: flex; align-items: center; gap: 7px; height: 24px; white-space: nowrap; }
.check input { appearance: none; width: 14px; height: 14px; border: 1px solid #b09898; border-radius: 2px; background: #fff; }
.fixed { width: 115px; }
.inset { padding-left: 5px; }
.wraps { display: flex; }

/* formatting toolbar */
.toolbar {
  display: flex;
  align-items: center;
  gap: 2px;
  height: 25px;
  padding-left: 24px;
  border-bottom: 1px solid #a08888;
}
.split, .field { display: flex; align-items: center; flex: none; }
.split .small { margin: 0 4px; }
.split button, .ic { display: grid; place-items: center; flex: none; width: 20px; height: 20px; }
.bar { flex: none; width: 1px; height: 16px; margin: 0 7px 0 6px; background: #cfc0c0; }
.field, .combo { flex: none; height: 20px; margin: 0 2px; padding: 0 4px 0 5px; border: 1px solid #b09898; border-radius: 2px; background: #fff; }
.field { gap: 3px; }
.field select { appearance: none; flex: 1; min-width: 0; height: 16px; outline: 0; }
.f-style { width: 106px; }
.f-rep { width: 88px; }
.f-font { width: 118px; }
.combo { width: 106px; padding-right: 0; }
.combo .unit { padding-right: 8px; }
.spacing { width: 103px; }
.spacing .unit { padding-right: 9px; }
.combo > .small { margin-right: 5px; }
.toolbar b { font-weight: 900; }
.split .ink { height: 18px; line-height: 14px; color: #b01010; border-bottom: 3px solid #e80000; width: 16px; margin: 0 2px; }

/* document area */
.frame {
  flex: 1;
  display: flex;
  flex-direction: column;
  margin: 0 2px 0 3px;
  border: solid #a08888;
  border-width: 0 1px 1px;
  background: #dbd1d0;
}
.workspace { flex: 1; display: flex; gap: 1px; overflow: hidden; border-bottom: 1px solid #a08484; }
.side { display: flex; flex-direction: column; gap: 6px; flex: none; width: 22px; padding: 7px 0 0 7px; }
.tab-kind { display: grid; place-items: center; width: 15px; height: 15px; border: 1px solid #8a6a6a; background: #fff; }
.vruler { flex: 1; width: 15px; height: 0; overflow: visible; }
.canvas { flex: 1; display: flex; flex-direction: column; align-items: center; min-width: 0; padding: 4px 0 0 3px; overflow: hidden; }
.hruler { position: relative; z-index: 1; width: 1000px; height: 24px; }
.paper {
  flex: 1;
  width: 992px;
  max-width: 100%;
  padding: 211px 76px 0 117px;
  border: solid #004f96;
  border-width: 1px 1px 0;
  border-left-color: #7fd0ee;
  background: radial-gradient(ellipse 360px 200px at 30% 46%, #007bca 0, #0080cd 35%, #008bd2 80%, #008fd3 100%);
  box-shadow: inset 0 0 60px 58px #0073c8, 0 0 60px 24px #f1d9cf;
}
.textbox { max-width: 590px; height: 222px; padding: 13px 4px 0; border: 1px dotted #3a2470; color: #fff; }
.textbox h1 { margin: 0; font-size: 78px; line-height: 112px; white-space: nowrap; }
.textbox p { margin: 18px 0 0; font-size: 37px; line-height: 54px; white-space: nowrap; }
h1, p { font-family: "Noto Sans CJK KR", sans-serif; font-weight: 700; text-shadow: 0 1px 2px #005a9e; }
.word { padding-right: 7px; }
h1 .word { padding-right: 16px; }
.vscroll { display: flex; flex-direction: column; flex: none; width: 17px; padding: 1px 2px 0 0; }
.vscroll button, .hscroll button { display: grid; place-items: center; flex: none; height: 17px; border: 1px solid #a58f8f; background: #f8f4f4; }
.vscroll .short { height: 10px; margin-bottom: 2px; background: #fff; }
.vscroll .apart { margin: 2px 0; }
.vscroll .joined { margin-top: -1px; }
.track { flex: 1; padding: 37px 2px 0; background: #cabebe; }
.thumb { height: 56px; border: 1px solid #a58f8f; border-radius: 5px; background: #f5f1f1; }

.tabbar {
  display: flex;
  height: 28px;
  background: linear-gradient(90deg, #dbd1d0 0, #dbd1d0 100px, #f2dad3 280px, #f2dad3 calc(100% - 200px), #dbd1d0 calc(100% - 90px));
}
.tabs { flex: 1; display: flex; align-items: flex-start; }
.tabs button { display: grid; place-items: center; width: 20px; height: 28px; }
.tabs .list { width: 24px; margin-left: 7px; }
.tab-sep { width: 1px; height: 16px; margin: 6px 4px 0 3px; background: #b09898; }
.tabs .doc { position: relative; width: 148px; height: 25px; margin-left: 4px; z-index: 1; }
.tabs .add { position: relative; width: 38px; height: 25px; margin-left: -3px; }
.tabshape { position: absolute; inset: 0; width: 100%; height: 100%; }
.doc span, .plus { position: relative; }
.grip { width: 3px; border: dotted #5a2a2a; border-width: 0 1px; }
.hscroll { flex: 1 1 6px; display: flex; align-items: flex-start; padding: 6px 19px 0 3px; }
.hscroll button { width: 17px; height: 16px; }
.hscroll .faint { border-color: #d8c6c2; background: #fbf5f3; }
.hscroll .narrow { width: 10px; margin-left: 3px; background: #fff; }
.htrack { flex: 1; height: 16px; background: linear-gradient(90deg, #e1c5bd 60%, #cabebe 85%); }

/* status bar */
.status { display: flex; justify-content: space-between; height: 22px; }
.cells, .views, .percent { display: flex; align-items: center; }
.cells { padding-left: 9px; }
.cell { display: flex; align-items: center; gap: 19px; height: 22px; padding: 2px 10px 0 11px; border-right: 1px solid #d8caca; white-space: nowrap; }
.cell:first-child { gap: 20px; }
.navy { color: #241c66; }
.views { gap: 8px; }
.view { display: grid; place-items: center; width: 20px; height: 20px; }
.view-sep { width: 1px; height: 14px; margin: 0 1px; background: #d8c0c0; }
.zoom { appearance: none; width: 88px; height: 12px; margin: 1px 0 0 2px; background: linear-gradient(#2a1560, #2a1560) center / 100% 2px no-repeat; }
.zoom::-webkit-slider-thumb { appearance: none; width: 10px; height: 10px; border: 1px solid #4a2a4a; border-radius: 5px; background: #fff; }
.percent { gap: 6px; margin-left: 5px; }
.resize { align-self: flex-end; margin-left: 12px; }

.num { font: 10px "Noto Sans", sans-serif; fill: #4a1616; text-anchor: middle; }
```
FILE: rulers.js
```js
const NS = 'http://www.w3.org/2000/svg';
const CM = 47.17;

function add(parent, name, attrs, text) {
  const el = document.createElementNS(NS, name);
  for (const key in attrs) el.setAttribute(key, attrs[key]);
  if (text !== undefined) el.textContent = text;
  parent.appendChild(el);
}

function drawHorizontal(svg) {
  const left = 4, right = 995, zero = 127, end = 705;
  add(svg, 'rect', { x: left, y: 3, width: right - left, height: 15, fill: '#f1dbd4' });
  add(svg, 'rect', { x: zero, y: 3, width: end - zero, height: 15, fill: '#fffdfb' });
  add(svg, 'path', { d: `M${left + .5} 3.5H${right + .5}V17.500H${left + .5}z`, fill: 'none', stroke: '#a08080' });
  for (let i = -25; i <= 183; i++) {
    const x = Math.round(zero + i * CM / 10);
    if (x <= left + 2 || x >= right - 2) continue;
    const h = i % 5 === 0 ? 4 : 2;
    add(svg, 'rect', { x, y: 17 - h, width: 1, height: h, fill: '#8a6060' });
    if (i % 10 === 0 && i !== 0) add(svg, 'text', { x: x, y: 13, class: 'num' }, Math.abs(i / 10));
  }
  for (let n = 1; n <= 8; n++) add(svg, 'rect', { x: Math.round(zero + n * 66.7), y: 18, width: 1, height: 5, fill: '#a08080' });
  add(svg, 'rect', { x: .5, y: .5, width: 8, height: 3, fill: '#fff', stroke: '#4a1616' });
  add(svg, 'path', { d: `M${zero - 3.5} 1.500h8v3l-4 5 4 5v3h-8v-3l4-5-4-5z`, fill: '#fff', stroke: '#4a1616' });
  add(svg, 'path', { d: `M${zero - 3.5} 18.500h8v4h-8z`, fill: '#fff', stroke: '#4a1616' });
  add(svg, 'path', { d: `M${end - 2.500} 18.500v-4l4-4 4 4v4z`, fill: '#fff', stroke: '#4a1616' });
}

function drawVertical(svg) {
  const height = svg.getBoundingClientRect().height, zero = 217, end = 427;
  add(svg, 'rect', { x: 0, y: zero, width: 14, height: end - zero, fill: '#faf6f6' });
  add(svg, 'path', { d: `M.5 0V${height}M14.500 0V${height}`, stroke: '#8a7070' });
  for (let i = -45; i < 95; i++) {
    const y = Math.round(zero + i * CM / 10);
    if (y < 1 || y > height) continue;
    const w = i % 5 === 0 ? 4 : 2;
    add(svg, 'rect', { x: 14 - w, y, width: w, height: 1, fill: '#8a6060' });
    if (i % 10 === 0) add(svg, 'text', { x: 0, y: 0, transform: `translate(9 ${y}) rotate(-90)`, class: 'num' }, Math.abs(i / 10));
  }
  add(svg, 'path', { d: 'M-.5 243.500h8v3h-5v5h-3z', fill: '#fff', stroke: '#4a1616' });
  add(svg, 'path', { d: 'M16.500 358.500h-3v5h-5v3h8z', fill: '#fff', stroke: '#4a1616' });
}

drawHorizontal(document.getElementById('hruler'));
drawVertical(document.getElementById('vruler'));
```
